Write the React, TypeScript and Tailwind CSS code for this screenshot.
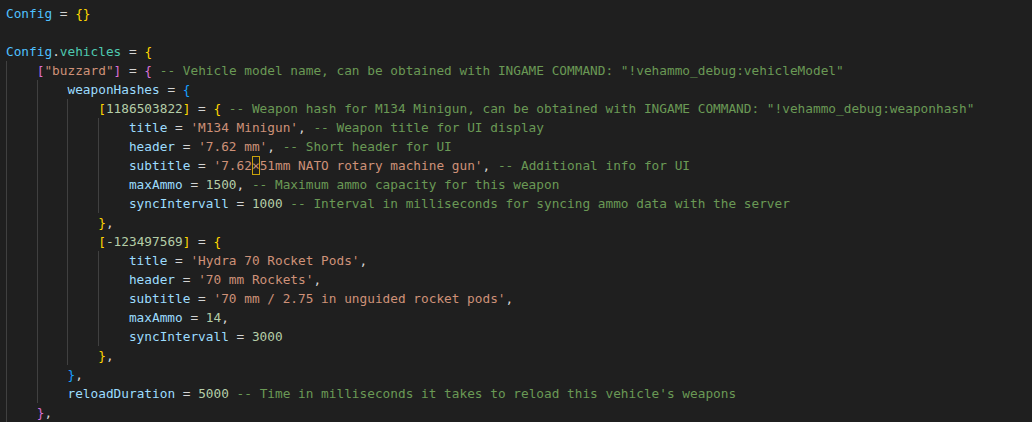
type Tok = [string, string]

const plain = "text-[#d4d4d4]"
const vr = "text-[#4fc1ff]"
const teal = "text-[#4ec9b0]"
const key = "text-[#9cdcfe]"
const str = "text-[#ce9178]"
const num = "text-[#b5cea8]"
const cmt = "text-[#6a9955]"
const gold = "text-[#ffd700]"
const orchid = "text-[#da70d6]"
const blue = "text-[#179fff]"
const mark = "mark"

const lines: { indent: number; toks: Tok[] }[] = [
  { indent: 0, toks: [["Config", vr], [" = ", plain], ["{}", gold]] },
  { indent: 0, toks: [] },
  { indent: 0, toks: [["Config", vr], [".", plain], ["vehicles", teal], [" = ", plain], ["{", gold]] },
  {
    indent: 1,
    toks: [
      ["[", orchid], ['"buzzard"', str], ["]", orchid], [" = ", plain], ["{", orchid],
      [' -- Vehicle model name, can be obtained with INGAME COMMAND: "!vehammo_debug:vehicleModel"', cmt],
    ],
  },
  { indent: 2, toks: [["weaponHashes", key], [" = ", plain], ["{", blue]] },
  {
    indent: 3,
    toks: [
      ["[", gold], ["1186503822", num], ["]", gold], [" = ", plain], ["{", gold],
      [' -- Weapon hash for M134 Minigun, can be obtained with INGAME COMMAND: "!vehammo_debug:weaponhash"', cmt],
    ],
  },
  { indent: 4, toks: [["title", key], [" = ", plain], ["'M134 Minigun'", str], [", ", plain], ["-- Weapon title for UI display", cmt]] },
  { indent: 4, toks: [["header", key], [" = ", plain], ["'7.62 mm'", str], [", ", plain], ["-- Short header for UI", cmt]] },
  {
    indent: 4,
    toks: [
      ["subtitle", key], [" = ", plain], ["'7.62", str], ["×", mark], ["51mm NATO rotary machine gun'", str],
      [", ", plain], ["-- Additional info for UI", cmt],
    ],
  },
  { indent: 4, toks: [["maxAmmo", key], [" = ", plain], ["1500", num], [", ", plain], ["-- Maximum ammo capacity for this weapon", cmt]] },
  {
    indent: 4,
    toks: [["syncIntervall", key], [" = ", plain], ["1000", num], [" -- Interval in milliseconds for syncing ammo data with the server", cmt]],
  },
  { indent: 3, toks: [["}", gold], [",", plain]] },
  { indent: 3, toks: [["[", gold], ["-123497569", num], ["]", gold], [" = ", plain], ["{", gold]] },
  { indent: 4, toks: [["title", key], [" = ", plain], ["'Hydra 70 Rocket Pods'", str], [",", plain]] },
  { indent: 4, toks: [["header", key], [" = ", plain], ["'70 mm Rockets'", str], [",", plain]] },
  { indent: 4, toks: [["subtitle", key], [" = ", plain], ["'70 mm / 2.75 in unguided rocket pods'", str], [",", plain]] },
  { indent: 4, toks: [["maxAmmo", key], [" = ", plain], ["14", num], [",", plain]] },
  { indent: 4, toks: [["syncIntervall", key], [" = ", plain], ["3000", num]] },
  { indent: 3, toks: [["}", gold], [",", plain]] },
  { indent: 2, toks: [["}", blue], [",", plain]] },
  {
    indent: 2,
    toks: [["reloadDuration", key], [" = ", plain], ["5000", num], [" -- Time in milliseconds it takes to reload this vehicle's weapons", cmt]],
  },
  { indent: 1, toks: [["}", orchid], [",", plain]] },
]

export default function App() {
  return (
    <div
      className="h-[422px] w-full overflow-hidden bg-[#1f1f1f] pt-[4px] pl-[6px] text-[12.77px] leading-[19px] whitespace-pre text-[#d4d4d4]"
      style={{ fontFamily: '"DejaVu Sans Mono", "Liberation Mono", monospace' }}
    >
      {lines.map((line, i) => (
        <div key={i} className="flex h-[19px] items-start">
          {Array.from({ length: line.indent }).map((_, j) => (
            <span key={j} className="inline-block h-[19px] w-[4ch] shrink-0 border-l border-[#404040]" />
          ))}
          <span>
            {line.toks.map(([text, cls], k) =>
              cls === mark ? (
                <span key={k} className="inline-block h-[19px] align-top text-[#ce9178] shadow-[inset_0_0_0_1px_#c9a20b]">
                  {text}
                </span>
              ) : (
                <span key={k} className={cls}>
                  {text}
                </span>
              )
            )}
          </span>
        </div>
      ))}
    </div>
  )
}
